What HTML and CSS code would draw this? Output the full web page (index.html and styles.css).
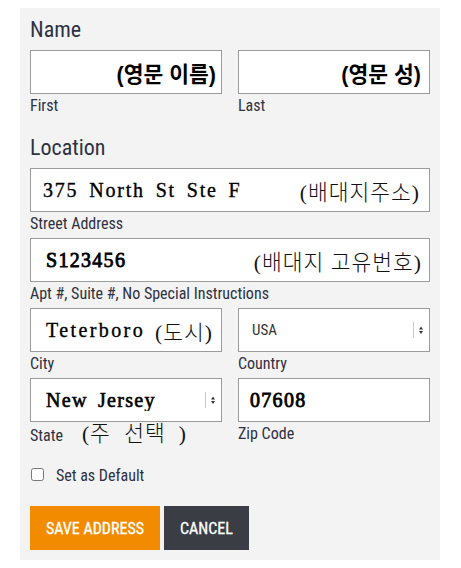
FILE: index.html
```html
<!DOCTYPE html>
<html lang="ko">
<head>
<meta charset="utf-8">
<title>Address</title>
<link rel="stylesheet" href="styles.css">
</head>
<body>
<form class="panel">
  <h2 class="heading">Name</h2>
  <div class="row">
    <div class="field">
      <div class="box box-end pad-first"><span class="hint-bold">(영문 이름)</span></div>
      <label class="label">First</label>
    </div>
    <div class="field">
      <div class="box box-end pad-last"><span class="hint-bold">(영문 성)</span></div>
      <label class="label">Last</label>
    </div>
  </div>

  <h2 class="heading heading-gap">Location</h2>
  <div class="field">
    <div class="box box-split pad-street"><span class="typed typed-street">375 North St Ste F</span><span class="hint">(배대지주소)</span></div>
    <label class="label">Street Address</label>
  </div>
  <div class="field">
    <div class="box box-split pad-apt"><span class="typed typed-bold">S123456</span><span class="hint">(배대지 고유번호)</span></div>
    <label class="label">Apt #, Suite #, No Special Instructions</label>
  </div>
  <div class="row">
    <div class="field">
      <div class="box pad-city"><span class="typed typed-city">Teterboro</span><span class="hint hint-city">(도시)</span></div>
      <label class="label">City</label>
    </div>
    <div class="field">
      <select class="select select-country">
        <option>USA</option>
      </select>
      <label class="label">Country</label>
    </div>
  </div>
  <div class="row">
    <div class="field">
      <select class="select select-state">
        <option>New Jersey</option>
      </select>
      <label class="label">State<span class="hint hint-state">(주 선택<span class="hint-close">)</span></span></label>
    </div>
    <div class="field">
      <div class="box pad-zip"><span class="typed typed-bold">07608</span></div>
      <label class="label">Zip Code</label>
    </div>
  </div>

  <label class="check"><input type="checkbox"><span>Set as Default</span></label>

  <div class="actions">
    <button type="button" class="btn btn-save">Save Address</button>
    <button type="button" class="btn btn-cancel">Cancel</button>
  </div>
</form>
</body>
</html>
```

FILE: styles.css
```css
* { box-sizing: border-box; }
html, body { margin: 0; background: #ffffff; }
body {
  font-family: "Roboto Condensed", "Roboto", "Liberation Sans", sans-serif;
  color: #2e3142;
}
.panel {
  width: 420px;
  margin: 8px 0 0 20px;
  padding: 9px 10px 10px;
  background: #f3f3f3;
}
.heading {
  margin: 0 0 7px;
  font-size: 22px;
  line-height: 26px;
  font-weight: 400;
  color: #2e3142;
}
.heading-gap { margin-top: 15px; }
.row {
  display: grid;
  grid-template-columns: 1fr 1fr;
  column-gap: 16px;
}
.field { display: flex; flex-direction: column; }
.box {
  height: 44px;
  border: 1px solid #9c9c9c;
  background: #ffffff;
  display: flex;
  align-items: center;
  white-space: nowrap;
  overflow: hidden;
}
.box-end { justify-content: flex-end; }
.box-split { justify-content: space-between; }
.pad-first { padding-right: 5px; }
.pad-last { padding-right: 8px; }
.pad-street { padding: 0 9px 0 12px; }
.pad-apt { padding: 0 7px 0 15px; }
.pad-city { padding: 0 0 0 15px; }
.pad-zip { padding-left: 11px; }
.label {
  display: block;
  height: 20px;
  margin: 2px 0 4px;
  font-size: 16px;
  line-height: 20px;
  white-space: nowrap;
}
.hint-bold {
  font-family: "Liberation Sans", "Noto Sans CJK KR", sans-serif;
  font-weight: 700;
  font-size: 21.5px;
  color: #000000;
}
.hint {
  font-family: "Liberation Serif", "Noto Sans CJK KR", serif;
  font-size: 21.5px;
  font-weight: 300;
  letter-spacing: 1px;
  color: #111111;
}
.hint-city { margin-left: 10px; }
.hint-state {
  margin-left: 19px;
  line-height: 20px;
  letter-spacing: 1px;
  word-spacing: 7px;
}
.hint-close { margin-left: 13px; }
.typed {
  font-family: "Liberation Serif", "Noto Sans CJK KR", serif;
  font-size: 20px;
  letter-spacing: 1.3px;
  word-spacing: 4px;
  color: #000000;
  -webkit-text-stroke: 0.35px #000000;
}
.typed-street { letter-spacing: 1.8px; }
.typed-city { letter-spacing: 2.4px; }
.typed-bold { -webkit-text-stroke: 0.8px #000000; }
.select {
  -webkit-appearance: none;
  appearance: none;
  width: 100%;
  height: 44px;
  margin: 0;
  border: 1px solid #9c9c9c;
  border-radius: 0;
  background: #ffffff url("data:image/svg+xml;utf8,<svg xmlns='http://www.w3.org/2000/svg' width='14' height='16'><path d='M1.5 0V16' stroke='%23c8c8c8'/><path d='M7 7.5h4l-2-3z M7 9h4l-2 3z' fill='%23333333'/></svg>") no-repeat right 3px center;
  outline: none;
}
.select-country {
  padding: 0 24px 0 13px;
  font-family: "Roboto Condensed", "Roboto", sans-serif;
  font-size: 15px;
  color: #333333;
}
.select-state {
  padding: 0 24px 0 15px;
  font-family: "Liberation Serif", serif;
  font-size: 20px;
  font-weight: 400;
  letter-spacing: 1.3px;
  word-spacing: 4px;
  color: #000000;
  -webkit-text-stroke: 0.6px #000000;
}
.check {
  display: flex;
  align-items: flex-start;
  margin-top: 17px;
  height: 22px;
  font-size: 16px;
  line-height: 22px;
}
.check input {
  width: 13px;
  height: 13px;
  margin: 3px 12px 0 1px;
}
.actions {
  display: flex;
  gap: 4px;
  margin-top: 19px;
}
.btn {
  height: 44px;
  padding: 0 16px;
  border: 0;
  border-radius: 0;
  font-family: "Roboto Condensed", "Roboto", sans-serif;
  font-size: 16px;
  font-weight: 400;
  text-transform: uppercase;
  color: #ffffff;
  -webkit-text-stroke: 0.3px #ffffff;
  cursor: pointer;
}
.btn-save { background: #f28b00; }
.btn-cancel { background: #3a3d44; }
```
